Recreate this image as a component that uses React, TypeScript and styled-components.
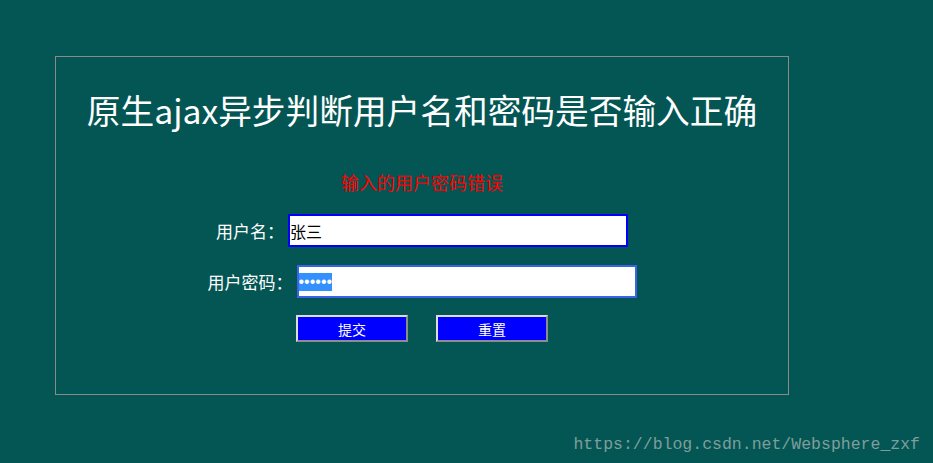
import { useEffect, useRef } from "react";
import styled, { createGlobalStyle } from "styled-components";

const GlobalStyle = createGlobalStyle`
  html, body {
    margin: 0;
    padding: 0;
    background-color: #045654;
    font-family: "Noto Sans CJK SC", "Noto Sans", sans-serif;
  }
  ::selection {
    background: #3390ff;
    color: #ffffff;
  }
`;

const Page = styled.div`
  position: relative;
  width: 933px;
  height: 463px;
  padding: 56px 0 0 55px;
  box-sizing: border-box;
`;

const Panel = styled.div`
  width: 734px;
  height: 339px;
  box-sizing: border-box;
  border: 1px solid #8a8a8a;
  display: flex;
  flex-direction: column;
  align-items: center;
`;

const Title = styled.h1`
  margin: 28px 0 0;
  font-size: 33.7px;
  line-height: 50px;
  font-weight: 400;
  color: #ffffff;
`;

const ErrorMsg = styled.p`
  margin: 35px 0 0;
  font-size: 18px;
  line-height: 24px;
  color: #ff0000;
`;

const Form = styled.form`
  margin-top: 20px;
  display: flex;
  flex-direction: column;
  align-items: center;
  gap: 18px;
`;

const Row = styled.div`
  display: flex;
  align-items: center;
  gap: 4px;
`;

const Label = styled.label`
  font-size: 17px;
  color: #ffffff;
`;

const Field = styled.input<{ $focused?: boolean }>`
  width: 340px;
  height: 33px;
  box-sizing: border-box;
  padding: 0;
  font-family: ${(p) =>
    p.type === "password"
      ? `"Liberation Sans", Arial, sans-serif`
      : `"Noto Sans CJK SC", "Noto Sans", sans-serif`};
  font-size: 16px;
  color: #000000;
  background: #ffffff;
  border: 2px solid ${(p) => (p.$focused ? "#3a63e6" : "#0000ff")};
  outline: none;
`;

const Buttons = styled.div`
  display: flex;
  gap: 28px;
  margin-top: -1px;
`;

const Button = styled.button`
  width: 112px;
  height: 27px;
  box-sizing: border-box;
  padding: 0;
  background: #0000ff;
  color: #ffffff;
  font-family: "Noto Sans CJK SC", "Noto Sans", sans-serif;
  font-size: 14px;
  border: 2px solid;
  border-color: #dcdcdc #8c8c8c #8c8c8c #dcdcdc;
  cursor: pointer;
`;

const Watermark = styled.span`
  position: absolute;
  right: 13px;
  bottom: 9px;
  font-family: "Liberation Mono", "DejaVu Sans Mono", monospace;
  font-size: 16.5px;
  color: #7f9e9b;
`;

export default function App() {
  const pwdRef = useRef<HTMLInputElement>(null);

  useEffect(() => {
    pwdRef.current?.focus();
    pwdRef.current?.select();
  }, []);

  return (
    <>
      <GlobalStyle />
      <Page>
        <Panel>
          <Title>原生ajax异步判断用户名和密码是否输入正确</Title>
          <ErrorMsg>输入的用户密码错误</ErrorMsg>
          <Form onSubmit={(e) => e.preventDefault()}>
            <Row>
              <Label htmlFor="username">用户名：</Label>
              <Field id="username" type="text" defaultValue="张三" />
            </Row>
            <Row>
              <Label htmlFor="password">用户密码：</Label>
              <Field id="password" ref={pwdRef} type="password" defaultValue="123456" $focused />
            </Row>
            <Buttons>
              <Button type="submit">提交</Button>
              <Button type="reset">重置</Button>
            </Buttons>
          </Form>
        </Panel>
        <Watermark>https://blog.csdn.net/Websphere_zxf</Watermark>
      </Page>
    </>
  );
}
